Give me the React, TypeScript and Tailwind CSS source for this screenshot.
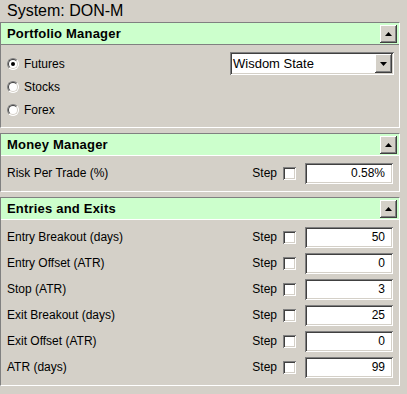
import React from "react";

const sunken =
  "shadow-[inset_1px_1px_0_#808080,inset_-1px_-1px_0_#ffffff,inset_2px_2px_0_#404040,inset_-2px_-2px_0_#d4d0c8]";
const raised =
  "shadow-[inset_-1px_-1px_0_#404040,inset_1px_1px_0_#ffffff,inset_-2px_-2px_0_#808080,inset_2px_2px_0_#d4d0c8]";

function Triangle({ up }: { up?: boolean }) {
  return (
    <svg width="7" height="4" viewBox="0 0 7 4" className="block">
      {up ? <path d="M3.5 0 L7 4 L0 4 Z" fill="#000" /> : <path d="M0 0 L7 0 L3.5 4 Z" fill="#000" />}
    </svg>
  );
}

function CollapseButton() {
  return (
    <button className={`flex h-[18px] w-[17px] items-center justify-center bg-[#d4d0c8] ${raised}`}>
      <Triangle up />
    </button>
  );
}

function Panel({
  title,
  divider,
  children,
}: {
  title: string;
  divider: "gray" | "white";
  children: React.ReactNode;
}) {
  return (
    <section className="w-[400px] border border-t-[#808080] border-l-[#808080] border-r-white border-b-white">
      <div
        className={`flex h-[22px] items-center justify-between bg-[#ccffcc] pl-[6px] pr-[2px] border-b ${
          divider === "gray" ? "border-b-[#808080]" : "border-b-white"
        }`}
      >
        <h2 className="text-[13px] font-bold tracking-[0.2px] text-black">{title}</h2>
        <CollapseButton />
      </div>
      {children}
    </section>
  );
}

function Radio({ label, checked }: { label: string; checked?: boolean }) {
  return (
    <label className="flex h-[23px] items-center gap-[5px]">
      <span className="relative flex h-[12px] w-[12px] items-center justify-center rounded-full border border-t-[#808080] border-l-[#808080] border-r-white border-b-white bg-white">
        <span className="absolute inset-0 rounded-full border border-t-[#404040] border-l-[#404040] border-r-[#d4d0c8] border-b-[#d4d0c8]" />
        {checked && <span className="h-[4px] w-[4px] rounded-full bg-black" />}
      </span>
      <span>{label}</span>
    </label>
  );
}

function StepRow({ label, value }: { label: string; value: string }) {
  return (
    <div className="flex h-[26px] items-center justify-between">
      <span>{label}</span>
      <div className="flex items-center">
        <span>Step</span>
        <span className={`ml-[6px] h-[13px] w-[13px] bg-white ${sunken}`} />
        <div className={`ml-[9px] flex h-[21px] w-[88px] items-center justify-end bg-white pr-[8px] ${sunken}`}>
          {value}
        </div>
      </div>
    </div>
  );
}

const entries = [
  { label: "Entry Breakout (days)", value: "50" },
  { label: "Entry Offset (ATR)", value: "0" },
  { label: "Stop (ATR)", value: "3" },
  { label: "Exit Breakout (days)", value: "25" },
  { label: "Exit Offset (ATR)", value: "0" },
  { label: "ATR (days)", value: "99" },
];

export default function App() {
  return (
    <div className="h-[394px] w-[407px] overflow-hidden bg-[#d4d0c8] font-['Liberation_Sans',Arial,sans-serif] text-[12px] text-black">
      <h1 className="flex h-[22px] items-center pl-[7px] text-[16px] leading-none">System: DON-M</h1>

      <Panel title="Portfolio Manager" divider="gray">
        <div className="flex items-start justify-between pt-[7px] pb-[6px] pl-[6px] pr-[5px]">
          <div className="flex flex-col">
            <Radio label="Futures" checked />
            <Radio label="Stocks" />
            <Radio label="Forex" />
          </div>
          <div className={`flex h-[23px] w-[164px] items-center justify-between bg-white pl-[3px] pr-[2px] text-[13px] ${sunken}`}>
            <span>Wisdom State</span>
            <span className={`flex h-[19px] w-[17px] items-center justify-center bg-[#d4d0c8] ${raised}`}>
              <Triangle />
            </span>
          </div>
        </div>
      </Panel>

      <div className="h-[5px]" />

      <Panel title="Money Manager" divider="white">
        <div className="pt-[4px] pb-[5px] pl-[6px] pr-[6px]">
          <StepRow label="Risk Per Trade (%)" value="0.58%" />
        </div>
      </Panel>

      <div className="h-[5px]" />

      <Panel title="Entries and Exits" divider="white">
        <div className="pt-[4px] pb-[5px] pl-[6px] pr-[6px]">
          {entries.map((e) => (
            <StepRow key={e.label} label={e.label} value={e.value} />
          ))}
        </div>
      </Panel>
    </div>
  );
}
